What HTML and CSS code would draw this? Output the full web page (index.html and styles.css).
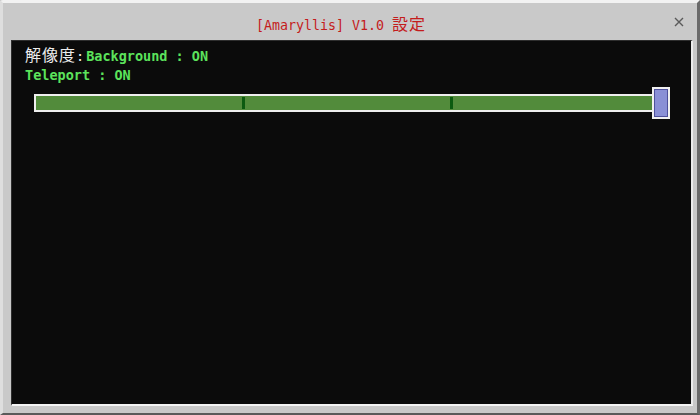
FILE: index.html
```html
<!DOCTYPE html>
<html lang="ja">
<head>
<meta charset="utf-8">
<title>[Amaryllis] V1.0 設定</title>
<link rel="stylesheet" href="styles.css">
</head>
<body>
<div class="window">
  <div class="titlebar">
    <div class="title">[Amaryllis] V1.0 <span class="cjk">設定</span></div>
    <svg class="close" width="10" height="10" viewBox="0 0 10 10"><path d="M1 1L9 9M9 1L1 9" stroke="#5a5a5a" stroke-width="1.4" fill="none"/></svg>
  </div>
  <div class="panel">
    <div class="line"><span class="label"><span class="cjk">解像度</span>:</span><span class="val first">Background : ON</span></div>
    <div class="line second"><span class="val">Teleport : ON</span></div>
    <div class="slider">
      <div class="track">
        <i class="tick" style="left:33.33%"></i>
        <i class="tick" style="left:66.67%"></i>
      </div>
      <div class="thumb"></div>
    </div>
  </div>
</div>
</body>
</html>
```
FILE: styles.css
```css
html, body {
  margin: 0;
  padding: 0;
  background: #c9c9c9;
}
.window {
  box-sizing: border-box;
  width: 700px;
  height: 415px;
  background: #c9c9c9;
  border-top: 3px solid #f2f2f2;
  border-left: 3px solid #dedede;
  border-right: 3px solid #6a6a6a;
  border-bottom: 2px solid #5a5a5a;
  border-top-left-radius: 3px;
  display: flex;
  flex-direction: column;
  padding: 0 4px 7px 8px;
  font-family: "DejaVu Sans Mono", "Liberation Mono", monospace;
}
.titlebar {
  height: 37px;
  position: relative;
  display: flex;
  align-items: center;
  justify-content: center;
}
.title {
  color: #c41c1c;
  font-size: 13.3px;
  line-height: 16px;
  padding-top: 5px;
  padding-right: 22px;
}
.cjk {
  font-family: "Noto Sans CJK JP", sans-serif;
  font-size: 16px;
  letter-spacing: 1px;
}
.close {
  position: absolute;
  right: 9px;
  top: 14px;
}
.panel {
  flex: 1;
  background: #0b0b0b;
  border-top: 1px solid #2e2e2e;
  border-left: 1px solid #2e2e2e;
  border-right: 2px solid #ececec;
  border-bottom: 2px solid #f4f4f4;
  padding: 4px 0 0 13px;
}
.line {
  height: 19px;
  line-height: 19px;
  font-size: 13.5px;
  font-weight: bold;
  white-space: nowrap;
}
.line.second {
  margin-top: 2px;
}
.label {
  color: #ececec;
  font-weight: normal;
}
.label .cjk {
  font-weight: normal;
}
.val {
  color: #5ce35c;
}
.val.first {
  margin-left: 2px;
}
.slider {
  position: relative;
  margin: 9px 0 0 9px;
  width: 626px;
  height: 18px;
}
.track {
  box-sizing: border-box;
  position: relative;
  height: 18px;
  border: 2px solid #efefef;
  background: #528b3b;
}
.tick {
  position: absolute;
  top: 1px;
  bottom: 1px;
  width: 3px;
  margin-left: -1px;
  background: #0c5a10;
}
.thumb {
  box-sizing: border-box;
  position: absolute;
  left: 618px;
  top: -7px;
  width: 18px;
  height: 32px;
  border: 2px solid #f0f0f0;
  background: #8a90d6;
  box-shadow: inset 0 0 0 1px #4e509c;
}
```
